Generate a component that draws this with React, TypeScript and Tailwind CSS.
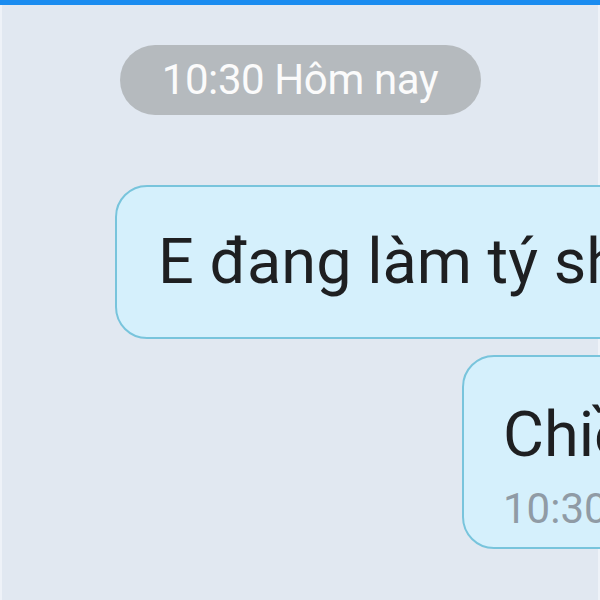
import React from 'react';

// 채팅 화면 일부 (확대된 상태)
export default function App() {
  return (
    <div
      className="w-[600px] h-[600px] overflow-hidden bg-[#e1e8f1] flex flex-col"
      style={{ fontFamily: 'Roboto, "Noto Sans", sans-serif' }}
    >
      {/* 상단 파란 바 */}
      <div className="h-[5px] bg-[#1a8cf0] shrink-0" />

      <div className="flex-1 flex flex-col border-x-2 border-[#eef2f8]">
        {/* 날짜 구분 */}
        <div className="mt-[40px] mx-auto w-[361px] h-[70px] rounded-full bg-[#b5babe] flex items-center justify-center">
          <span className="text-[42px] leading-none text-[#fbfbfb] tracking-[-0.4px]">10:30 Hôm nay</span>
        </div>

        {/* 보낸 메시지 1 */}
        <div className="mt-[70px] ml-[113px] w-[560px] h-[154px] shrink-0 rounded-[32px] border-2 border-[#78c4dc] bg-[#d5f0fc] flex items-center pl-[41px] whitespace-nowrap">
          <span className="text-[63px] leading-none text-[#1e1f21] -mt-[1px]">E đang làm tý shop nhé</span>
        </div>

        {/* 보낸 메시지 2 */}
        <div className="mt-[16px] ml-[460px] w-[300px] h-[194px] shrink-0 rounded-[32px] border-2 border-[#78c4dc] bg-[#d5f0fc] flex flex-col pl-[39px] pt-[46px] whitespace-nowrap">
          <span className="text-[63px] leading-none text-[#1e1f21]">Chiều nay</span>
          <span className="mt-[22px] text-[42px] leading-none text-[#909ba5]">10:30</span>
        </div>
      </div>
    </div>
  );
}
